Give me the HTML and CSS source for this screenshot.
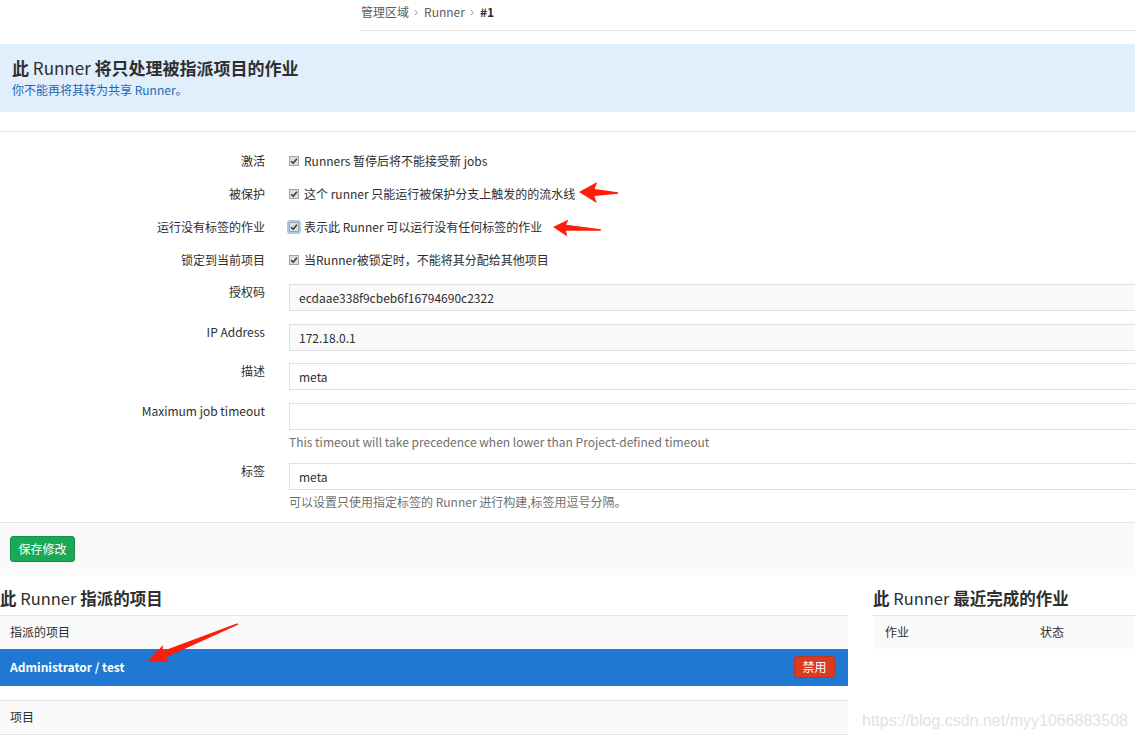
FILE: index.html
```html
<!DOCTYPE html>
<html lang="zh-CN">
<head>
<meta charset="utf-8">
<title>Runner #1</title>
<link rel="stylesheet" href="styles.css">
</head>
<body>
<div class="page">
  <nav class="breadcrumb">
    <span class="crumb">管理区域</span>
    <svg class="chev" width="5" height="7" viewBox="0 0 5 7"><polyline points="1,1 3.5,3.5 1,6" fill="none" stroke="#9a9a9a" stroke-width="1"/></svg>
    <span class="crumb">Runner</span>
    <svg class="chev" width="5" height="7" viewBox="0 0 5 7"><polyline points="1,1 3.5,3.5 1,6" fill="none" stroke="#9a9a9a" stroke-width="1"/></svg>
    <span class="crumb current">#1</span>
  </nav>

  <div class="info-box">
    <h3 class="info-title">此 <span class="lt">Runner</span> 将只处理被指派项目的作业</h3>
    <p class="info-sub">你不能再将其转为共享 Runner。</p>
  </div>

  <form class="runner-form">
    <div class="form-body">
      <div class="row check-row">
        <label class="lbl">激活</label>
        <div class="ctl"><span class="cb"><svg width="10" height="10" viewBox="0 0 10 10"><rect x="0.5" y="0.5" width="9" height="9" fill="#dedede" stroke="#a3a3a3"/><polyline points="2.2,5.2 4.2,7.2 7.9,2.8" fill="none" stroke="#333" stroke-width="1.5"/></svg></span><span>Runners 暂停后将不能接受新 jobs</span></div>
      </div>
      <div class="row check-row">
        <label class="lbl">被保护</label>
        <div class="ctl"><span class="cb"><svg width="10" height="10" viewBox="0 0 10 10"><rect x="0.5" y="0.5" width="9" height="9" fill="#dedede" stroke="#a3a3a3"/><polyline points="2.2,5.2 4.2,7.2 7.9,2.8" fill="none" stroke="#333" stroke-width="1.5"/></svg></span><span>这个 runner 只能运行被保护分支上触发的的流水线</span></div>
      </div>
      <div class="row check-row">
        <label class="lbl">运行没有标签的作业</label>
        <div class="ctl"><span class="cb focus"><svg width="10" height="10" viewBox="0 0 10 10"><rect x="0.5" y="0.5" width="9" height="9" fill="#dedede" stroke="#a3a3a3"/><polyline points="2.2,5.2 4.2,7.2 7.9,2.8" fill="none" stroke="#333" stroke-width="1.5"/></svg></span><span>表示此 Runner 可以运行没有任何标签的作业</span></div>
      </div>
      <div class="row check-row">
        <label class="lbl">锁定到当前项目</label>
        <div class="ctl"><span class="cb"><svg width="10" height="10" viewBox="0 0 10 10"><rect x="0.5" y="0.5" width="9" height="9" fill="#dedede" stroke="#a3a3a3"/><polyline points="2.2,5.2 4.2,7.2 7.9,2.8" fill="none" stroke="#333" stroke-width="1.5"/></svg></span><span>当Runner被锁定时，不能将其分配给其他项目</span></div>
      </div>

      <div class="row input-row first-input">
        <label class="lbl">授权码</label>
        <div class="ctl-col"><div class="inp readonly">ecdaae338f9cbeb6f16794690c2322</div></div>
      </div>
      <div class="row input-row">
        <label class="lbl">IP Address</label>
        <div class="ctl-col"><div class="inp readonly">172.18.0.1</div></div>
      </div>
      <div class="row input-row">
        <label class="lbl">描述</label>
        <div class="ctl-col"><div class="inp">meta</div></div>
      </div>
      <div class="row input-row with-help">
        <label class="lbl">Maximum job timeout</label>
        <div class="ctl-col"><div class="inp"></div><p class="help">This timeout will take precedence when lower than Project-defined timeout</p></div>
      </div>
      <div class="row input-row with-help last">
        <label class="lbl">标签</label>
        <div class="ctl-col"><div class="inp">meta</div><p class="help">可以设置只使用指定标签的 Runner 进行构建,标签用逗号分隔。</p></div>
      </div>
    </div>
    <div class="form-actions">
      <button type="button" class="btn-save">保存修改</button>
    </div>
  </form>

  <div class="bottom">
    <section class="projects">
      <h4 class="sec-title">此 <span class="lt">Runner</span> 指派的项目</h4>
      <div class="tbl">
        <div class="tbl-head">指派的项目</div>
        <div class="tbl-row active">
          <strong>Administrator / test</strong>
          <button type="button" class="btn-disable">禁用</button>
        </div>
      </div>
      <div class="tbl second">
        <div class="tbl-head">项目</div>
      </div>
    </section>
    <section class="jobs">
      <h4 class="sec-title">此 <span class="lt">Runner</span> 最近完成的作业</h4>
      <div class="tbl">
        <div class="tbl-head jobs-head"><span>作业</span><span>状态</span></div>
      </div>
    </section>
  </div>

  <svg class="annot" width="1135" height="740" viewBox="0 0 1135 740">
    <polygon fill="#ff1c0a" transform="translate(579 192) rotate(1.5)" points="0,0 18,-10.5 15.5,-3.5 39,-0.7 39,0.7 15.5,3.5 18,10.5"/>
    <polygon fill="#ff1c0a" transform="translate(553 227) rotate(3.6)" points="0,0 15,-8.5 13,-3 48,-0.7 48,0.7 13,3 15,8.5"/>
    <polygon fill="#ff1c0a" transform="translate(148 661) rotate(-22.4)" points="0,0 20,-9 17,-3.5 97,-0.8 97,0.8 17,3.5 20,9"/>
  </svg>
  <div class="watermark">https://blog.csdn.net/myy1066883508</div>
</div>
</body>
</html>
```
FILE: styles.css
```css
* { box-sizing: border-box; }
html, body { margin: 0; padding: 0; }
body {
  font-family: "Noto Sans CJK SC", "Noto Sans", sans-serif;
  font-size: 12px;
  line-height: 16px;
  color: #2e2e2e;
  background: #fff;
  overflow: hidden;
}
.page { position: relative; width: 1135px; height: 740px; }

.breadcrumb {
  margin-left: 361px;
  height: 31px;
  padding-top: 4px;
  border-bottom: 1px solid #e5e5e5;
  display: flex;
  align-items: flex-start;
  gap: 5px;
  color: #5c5c5c;
}
.breadcrumb .chev { margin-top: 5px; }
.crumb.current { font-weight: bold; color: #2e2e2e; }

.info-box {
  margin-top: 13px;
  height: 68px;
  background: #e1effc;
  padding: 13px 12px 0;
}
.info-title {
  margin: 0;
  font-size: 17px;
  line-height: 22px;
  font-weight: bold;
  color: #2e2e2e;
}
.lt { font-weight: normal; }
.info-sub {
  margin: 3px 0 0;
  color: #1b69b6;
}

.runner-form {
  margin-top: 19px;
  border-top: 1px solid #e5e5e5;
}
.form-body { padding-top: 12px; }
.row { display: flex; gap: 24px; }
.lbl { width: 265px; flex: none; text-align: right; }
.check-row { height: 33.2px; align-items: center; }
.ctl { display: flex; align-items: center; gap: 5px; }
.cb { display: inline-flex; width: 10px; height: 10px; }
.cb svg { display: block; }
.cb.focus { outline: 2px solid #a9c7f2; outline-offset: 0; border-radius: 1px; }

.input-row { margin-bottom: 12.5px; }
.first-input { margin-top: 7.3px; }
.with-help { margin-bottom: 13px; }
.input-row.last { margin-bottom: 12px; }
.ctl-col { flex: 1; }
.inp {
  height: 27px;
  border: 1px solid #dfdfdf;
  border-right: 0;
  padding-left: 9px;
  line-height: 25px;
  background: #fff;
}
.inp.readonly { background: #fafafa; }
.help { margin: 4px 0 0; color: #707070; }

.form-actions {
  border-top: 1px solid #e5e5e5;
  background: #fafafa;
  padding: 13px 10px;
}
.btn-save {
  display: block;
  height: 26px;
  width: 65px;
  padding: 0;
  font: inherit;
  color: #fff;
  background: #1aaa55;
  border: 1px solid #168f48;
  border-radius: 3px;
}

.bottom { display: flex; gap: 25px; }
.projects { width: 848px; flex: none; }
.jobs { flex: 1; }
.sec-title {
  margin: 12px 0 6px;
  font-size: 16.5px;
  line-height: 22px;
  font-weight: bold;
  color: #2e2e2e;
}
.tbl { border-top: 1px solid #e5e5e5; }
.tbl-head {
  height: 33px;
  background: #fafafa;
  padding-left: 10px;
  display: flex;
  align-items: center;
}
.tbl-row.active {
  height: 37px;
  background: #1f78d1;
  color: #fff;
  padding: 0 13px 0 10px;
  display: flex;
  align-items: center;
  justify-content: space-between;
}
.btn-disable {
  height: 22px;
  width: 41px;
  padding: 0;
  font: inherit;
  color: #fff;
  background: #db3b21;
  border: 1px solid #c0341d;
  border-radius: 3px;
}
.tbl.second { margin-top: 14px; border-bottom: 1px solid #e5e5e5; }
.jobs-head { padding-left: 12px; }
.jobs-head span:first-child { width: 155px; }

.annot { position: absolute; left: 0; top: 0; pointer-events: none; }
.watermark {
  position: absolute;
  left: 862px;
  top: 711px;
  font-family: "Liberation Sans", Arial, sans-serif;
  font-size: 16px;
  line-height: 20px;
  color: #e2e2e2;
  white-space: nowrap;
}
```
